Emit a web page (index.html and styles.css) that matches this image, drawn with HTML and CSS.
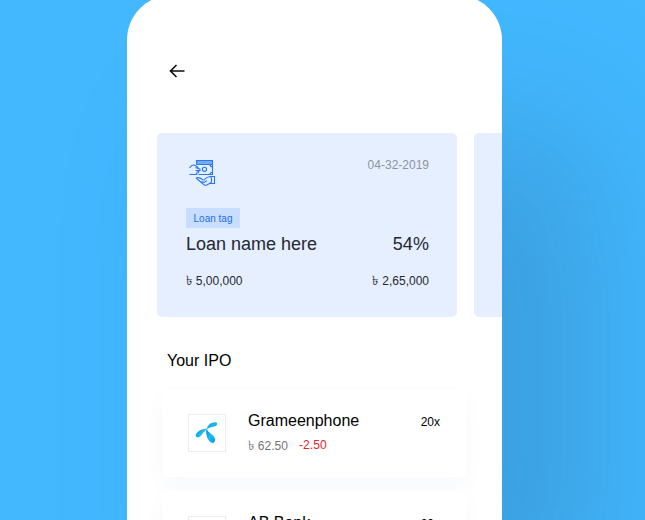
FILE: index.html
```
<!DOCTYPE html>
<html lang="en">
<head>
<meta charset="utf-8">
<title>Loans and IPO</title>
<link rel="stylesheet" href="styles.css">
</head>
<body>
<main class="phone">
  <header class="topbar">
    <svg class="back" viewBox="0 0 16 14" role="img" aria-label="Back"><path d="M15.500 7H1.500M7.500 1L1.500 7l6 6"/></svg>
  </header>
  <section class="loans">
    <article class="loan">
      <div class="row loan-head">
        <svg class="cash" viewBox="0 0 28 28" aria-hidden="true">
          <path class="shade" d="M8 1.500h17v4H8z"/>
          <path d="M8.500 5.500v-4h16v14H10.500M8.500 5.500h16M22 5.500c0 1.500 1 2.300 2.500 2.300M22 15.500c0-1.500 1-2.300 2.500-2.300"/>
          <circle cx="16.500" cy="10.300" r="2.100"/>
          <path d="M1.500 9C3 6.500 4.300 5.600 6.300 6l4.200 2.500M7.500 8.500l4.500 1.700v1.300H7.500M8.500 11.500l2.300 1.200-.8 1.300H8.500v1.500h-7"/>
          <path d="M8 19c2-.8 4.500-.3 6.500 1.700l1.800.3c2-2.500 4-3.500 6.700-3.500M8 19l8.500 7.200h2l4-2.300h1M13.500 22.500l2.500 1 3-1.700M23 17.500h3.500v7H23c.8-2.200.8-4.800 0-7z"/>
        </svg>
        <time class="date">04-32-2019</time>
      </div>
      <span class="tag">Loan tag</span>
      <div class="row loan-title"><span>Loan name here</span><span class="percent">54%</span></div>
      <div class="row loan-sums"><span><span class="taka">৳</span> 5,00,000</span><span><span class="taka">৳</span> 2,65,000</span></div>
    </article>
    <article class="loan"></article>
  </section>
  <h2 class="heading">Your IPO</h2>
  <section class="ipos">
    <article class="ipo">
      <div class="logo">
        <svg viewBox="0 0 24 24" aria-hidden="true">
          <defs>
            <linearGradient id="petal" x1="0" y1="0" x2="1" y2="1"><stop offset="0" stop-color="#0a86cc"/><stop offset=".5" stop-color="#1abcf6"/><stop offset="1" stop-color="#0b9ade"/></linearGradient>
          </defs>
          <g fill="url(#petal)">
            <path d="M12 8.300C12 4.500 15.500 1.600 20 1.300c3-.1 2.800 2.700.6 3.700-2.700 1.100-6.200.9-8.600 3.300z"/>
            <path d="M12.800 7.700C8.300 7.200 3 9.500 1 13c-1.100 2.700 1 4.400 3.500 2.700C7.700 13.600 8.600 9.800 12.800 7.700z"/>
            <path d="M11.700 7.500c-1.500 4.500.2 11.200 4.300 14 2.600 1.300 4.500-.4 4-3.500C19.200 13.300 12.700 12 11.700 7.500z"/>
          </g>
        </svg>
      </div>
      <div class="info">
        <div class="name">Grameenphone</div>
        <div class="prices"><span class="price"><span class="taka">৳</span> 62.50</span><span class="change">-2.50</span></div>
      </div>
      <span class="count">20x</span>
    </article>
    <article class="ipo">
      <div class="logo"></div>
      <div class="info"><div class="name">AB Bank</div></div>
      <span class="count">20x</span>
    </article>
  </section>
</main>
</body>
</html>
```
FILE: styles.css
```
* { box-sizing: border-box; }
body {
  margin: 0;
  height: 520px;
  overflow: hidden;
  display: flow-root;
  background: #43b8ff;
  font-family: "Liberation Sans", Arial, sans-serif;
  color: #000;
}
.phone {
  width: 375px;
  height: 812px;
  margin: -5px 0 0 127px;
  border-radius: 45px;
  overflow: hidden;
  background: #fff;
  box-shadow: 88px 135px 150px rgba(38, 90, 130, .27);
}
.topbar { height: 138px; padding: 69px 0 0 42px; }
.back { display: block; width: 16px; height: 14px; fill: none; stroke: #100b12; stroke-width: 1.6; }
.loans { display: flex; gap: 17px; padding-left: 30px; }
.loan {
  flex: 0 0 300px;
  height: 184px;
  padding: 26px 28px 0 29px;
  border-radius: 5px;
  background: #e5efff;
  color: #262831;
}
.row { display: flex; justify-content: space-between; }
.loan-head { height: 49px; }
.cash { width: 28px; height: 28px; margin-left: 2px; fill: none; stroke: #2878ee; stroke-width: 1.1; }
.cash .shade { fill: #76aceb; stroke: none; }
.date { font-size: 12px; line-height: 13px; color: #8e949f; }
.tag {
  display: block;
  width: 54px;
  height: 20px;
  background: #c9deff;
  color: #1a6fec;
  font-size: 10px;
  line-height: 21px;
  text-align: center;
}
.loan-title { margin-top: 5px; font-size: 18px; line-height: 22px; }
.percent { letter-spacing: .1px; }
.loan-sums { margin-top: 18px; font-size: 12px; line-height: 16px; }
.taka { font-size: 13px; line-height: 1; margin-right: .5px; }
.heading { margin: 34px 0 0 40px; font-size: 16px; line-height: 20px; font-weight: 400; }
.ipos { margin-top: 19px; padding: 0 35px; display: grid; gap: 14px; }
.ipo {
  height: 87px;
  padding: 24px 27px 0 26px;
  display: flex;
  align-items: flex-start;
  background: #fff;
  box-shadow: 0 8px 18px rgba(60, 100, 180, .04);
}
.ipo + .ipo { padding-top: 25px; }
.logo { width: 38px; height: 38px; padding: 6px; border: 1px solid #ededee; }
.logo svg { display: block; width: 24px; height: 24px; }
.info { flex: 1; margin: -3px 0 0 22px; }
.name { font-size: 16px; line-height: 20px; }
.prices { display: flex; gap: 11px; margin-top: 7px; font-size: 12px; line-height: 14px; }
.price { padding-top: 1px; color: #737373; }
.change { color: #ed2128; letter-spacing: .1px; }
.count { font-size: 12px; line-height: 16px; }
```
